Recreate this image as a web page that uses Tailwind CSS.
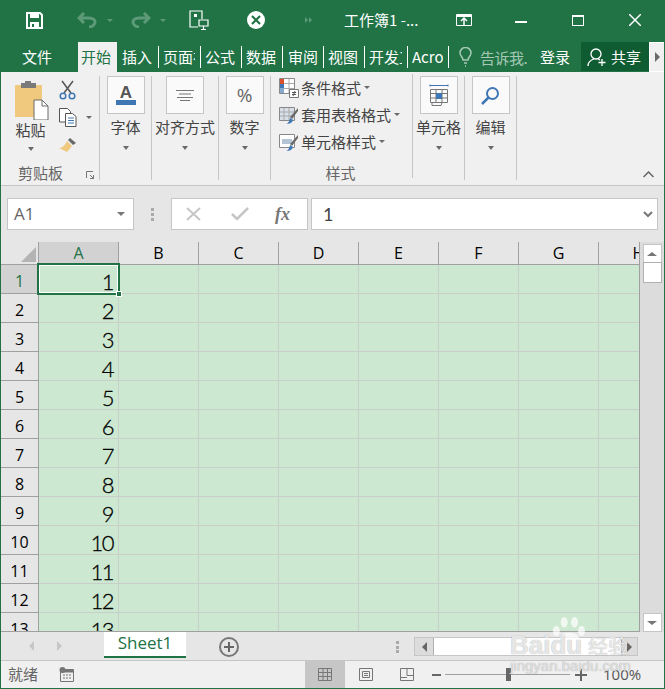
<!DOCTYPE html>
<html lang="en">
<head>
  <meta charset="UTF-8">
  <meta name="viewport" content="width=device-width, initial-scale=1.0">
  <title>工作簿1 - Excel</title>
  <script src="https://cdn.jsdelivr.net/npm/@tailwindcss/browser@4"></script>
</head>
<body class="bg-[#f0f0f0] font-['Noto_Sans_CJK_SC','Noto_Sans',sans-serif]">
  <div class="relative w-[665px] h-[689px] overflow-hidden flex flex-col border-x border-b border-[#217346] bg-[#e6e6e6]">

    <!-- title bar -->
    <div class="h-[42px] shrink-0 -mx-px pb-[2px] bg-[#217346] flex items-center text-white">
      <div class="w-[24px] ml-[22px] flex justify-center">
        <svg width="17" height="17" viewBox="0 0 17 17"><path d="M1 1h13l2 2v13H1z" fill="none" stroke="#fff" stroke-width="2"/><path d="M4 1h9v5H4zM4 10h9v6H4z" fill="#fff"/><path d="M6 12h2v3H6z" fill="#217346"/></svg>
      </div>
      <div class="w-[28px] ml-[27px] flex justify-center">
        <svg width="20" height="16" viewBox="0 0 20 16" fill="none" stroke="#5d9a78" stroke-width="3"><path d="M7 1L2 6l5 5M2 6h10c4 0 6 2 6 4s-2 5-6 5"/></svg>
      </div>
      <div class="w-0 h-0 ml-[6px] border-x-[3px] border-t-[3px] border-x-transparent border-t-[#5d9a78]"></div>
      <div class="w-[28px] ml-[14px] flex justify-center">
        <svg width="20" height="16" viewBox="0 0 20 16" fill="none" stroke="#5d9a78" stroke-width="3"><path d="M13 1l5 5-5 5M18 6H8C4 6 2 8 2 10s2 5 6 5"/></svg>
      </div>
      <div class="w-0 h-0 ml-[5px] border-x-[3px] border-t-[3px] border-x-transparent border-t-[#5d9a78]"></div>
      <div class="w-[24px] ml-[21px] flex justify-center">
        <svg width="20" height="20" viewBox="0 0 20 20" fill="none" stroke="#fff" stroke-width="1.2"><path d="M9 17H1V1h12v8"/><path d="M5 4h3v3H5z" fill="#fff" stroke="none"/><path d="M10 10h9v6h-9zM14.500 16v3M12 19.500h5"/></svg>
      </div>
      <div class="w-[18px] h-[18px] ml-[36px] rounded-full bg-white flex items-center justify-center">
        <svg width="10" height="10" viewBox="0 0 10 10" stroke="#217346" stroke-width="2.200"><path d="M1 1l8 8M9 1l-8 8"/></svg>
      </div>
      <div class="ml-[40px] flex">
        <div class="w-0 h-0 border-y-[3px] border-l-[3px] border-y-transparent border-l-[#5d9a78]"></div>
        <div class="w-0 h-0 ml-px border-y-[3px] border-l-[3px] border-y-transparent border-l-[#5d9a78]"></div>
      </div>
      <div class="ml-[32px] w-[84px] text-[15px] leading-[20px] whitespace-nowrap">工作簿1 -...</div>
      <div class="w-[18px] ml-[27px] flex justify-center">
        <svg width="16" height="12" viewBox="0 0 16 12" fill="none" stroke="#fff"><path d="M.5 .5h15v11H.5z"/><path d="M.5 2h15" stroke-width="2"/><path d="M8 11V4M5 7l3-3 3 3" stroke-width="1.500"/></svg>
      </div>
      <div class="w-[12px] h-[2px] ml-[42px] mt-[3px] bg-white"></div>
      <div class="w-[12px] h-[11px] ml-[45px] border border-t-2 border-white"></div>
      <div class="w-[12px] ml-[45px] flex justify-center">
        <svg width="12" height="12" viewBox="0 0 12 12" stroke="#fff" stroke-width="1.500"><path d="M0 0l12 12M12 0L0 12"/></svg>
      </div>
    </div>

    <!-- ribbon tabs -->
    <div class="h-[30px] shrink-0 -mx-px bg-[#217346] flex text-white text-[15px] leading-[30px] whitespace-nowrap">
      <div class="w-[78px] pl-[22px]">文件</div>
      <div class="w-[39px] bg-[#f0f0f0] text-[#217346] pl-[3px]">开始</div>
      <div class="flex items-center h-full">
        <div class="w-[42px] h-[22px] leading-[22px] overflow-hidden border-r border-white pl-[5px]">插入</div>
        <div class="w-[42px] h-[22px] leading-[22px] border-r border-white pl-[4px]"><div class="w-[32px] overflow-hidden">页面布局</div></div>
        <div class="w-[41px] h-[22px] leading-[22px] overflow-hidden border-r border-white pl-[4px]">公式</div>
        <div class="w-[41px] h-[22px] leading-[22px] overflow-hidden border-r border-white pl-[4px]">数据</div>
        <div class="w-[41px] h-[22px] leading-[22px] overflow-hidden border-r border-white pl-[5px]">审阅</div>
        <div class="w-[41px] h-[22px] leading-[22px] overflow-hidden border-r border-white pl-[4px]">视图</div>
        <div class="w-[43px] h-[22px] leading-[22px] border-r border-white pl-[4px]"><div class="w-[33px] overflow-hidden">开发工具</div></div>
        <div class="w-[41px] h-[22px] leading-[22px] border-r border-white pl-[4px]"><div class="w-[31px] overflow-hidden">Acrobat</div></div>
      </div>
      <div class="w-[31px] flex items-center justify-center pl-[2px]">
        <svg width="13" height="20" viewBox="0 0 13 20" fill="none" stroke="#a6c9b5" stroke-width="1.500"><path d="M4 13c0-3-3-4-3-7a5.500 5.500 0 0 1 11 0c0 3-3 4-3 7zM5 16h3M6 19h1"/></svg>
      </div>
      <div class="w-[50px] overflow-hidden text-[#a6c9b5] mt-px tracking-[-0.5px]">告诉我.</div>
      <div class="w-[51px] pl-[10px]">登录</div>
      <div class="w-[68px] h-[29px] bg-[#0f5c32] flex items-center pl-[6px] gap-[4px]">
        <svg width="20" height="20" viewBox="0 0 20 20" fill="none" stroke="#fff" stroke-width="1.300"><circle cx="9" cy="7" r="5"/><path d="M1 19c0-4 3-6 6-7M11 12l2 1M15 12v7M11.500 15.500h7"/></svg>
        <span class="leading-[29px]">共享</span>
      </div>
      <div class="w-[16px] h-[30px] bg-[#f0f0f0] border border-white flex items-center justify-center">
        <div class="w-0 h-0 border-y-[5px] border-l-[5px] border-y-transparent border-l-[#6a6a6a]"></div>
      </div>
    </div>

    <!-- ribbon -->
    <div class="relative h-[114px] shrink-0 bg-[#f0f0f0] border-b border-[#c6c6c6] flex text-[15px] text-[#444] leading-[20px] pt-[4px]">
      <!-- clipboard -->
      <div class="w-[99px] h-[104px] border-r border-[#c6c6c6] relative shrink-0">
        <div class="flex">
          <div class="w-[58px] flex flex-col items-center pl-[4px] pt-[4px]">
            <svg width="36" height="40" viewBox="0 0 36 40"><path d="M1 5h27v32H1z" fill="#f0c97f"/><path d="M7 3h4V1h6v2h5v5H7z" fill="#7a7a7a"/><path d="M20 20h8l6 6v14H20z" fill="#fff" stroke="#6a6a6a"/><path d="M28 20v6h6" fill="none" stroke="#6a6a6a"/></svg>
            <div class="-ml-[3px]">粘贴</div>
            <div class="mt-[7px] -ml-[3px] w-0 h-0 border-x-[3.500px] border-t-[4px] border-x-transparent border-t-[#6a6a6a]"></div>
          </div>
          <div class="flex flex-col pt-[4px]">
            <svg width="18" height="20" viewBox="0 0 18 20" fill="none" stroke="#555" stroke-width="1.500"><path d="M3 1l9 12M14 1L5 13"/><circle cx="4" cy="16" r="2.800" stroke="#3f77b5"/><circle cx="13" cy="16" r="2.800" stroke="#3f77b5"/></svg>
            <div class="flex items-center mt-[8px]">
              <svg width="18" height="19" viewBox="0 0 18 19" fill="none" stroke="#555"><path d="M.5 .5h8l3 3V14H.5z" fill="#fff"/><path d="M6.500 5.500h7l3.500 3v10H6.500z" fill="#fff"/><path d="M9 10h6M9 12.500h6M9 15h6" stroke="#3f77b5"/></svg>
              <div class="ml-[9px] w-0 h-0 border-x-[3px] border-t-[3px] border-x-transparent border-t-[#6a6a6a]"></div>
            </div>
            <svg class="mt-[10px]" width="18" height="16" viewBox="0 0 18 16"><path d="M11 1l6 5-3 2-5-5z" fill="#6a6a6a"/><path d="M8 4l5 5-5 6-8-4c4 0 6-3 8-7z" fill="#f0c97f"/></svg>
          </div>
        </div>
        <div class="absolute left-[17px] -bottom-[3px] text-[#666]">剪贴板</div>
        <svg class="absolute left-[85px] bottom-[1px]" width="8" height="8" viewBox="0 0 8 8" fill="none" stroke="#777"><path d="M.5 7V.5H7M4 4l3.500 3.500M7.500 4v3.500H4"/></svg>
      </div>

      <!-- collapsed groups -->
      <div class="w-[52px] h-[104px] border-r border-[#c6c6c6] flex flex-col items-center shrink-0">
        <div class="w-[38px] h-[38px] border border-[#c6c6c6] bg-[#fafafa] flex items-center justify-center">
          <svg width="22" height="22" viewBox="0 0 22 22"><text x="11" y="14" text-anchor="middle" font-family="Liberation Sans" font-size="17" font-weight="700" fill="#555">A</text><path d="M1 16h20v5H1z" fill="#3f77b5"/></svg>
        </div>
        <div class="mt-[3px]">字体</div>
        <div class="mt-[9px] w-0 h-0 border-x-[3.500px] border-t-[4px] border-x-transparent border-t-[#6a6a6a]"></div>
      </div>
      <div class="w-[67px] h-[104px] border-r border-[#c6c6c6] flex flex-col items-center shrink-0">
        <div class="w-[38px] h-[38px] border border-[#c6c6c6] bg-[#fafafa] flex items-center justify-center">
          <svg width="18" height="11" viewBox="0 0 18 11" stroke="#777"><path d="M0 .5h18M3 4h12M1 7.500h16M4 10.500h10"/></svg>
        </div>
        <div class="mt-[3px] whitespace-nowrap">对齐方式</div>
        <div class="mt-[9px] w-0 h-0 border-x-[3.500px] border-t-[4px] border-x-transparent border-t-[#6a6a6a]"></div>
      </div>
      <div class="w-[52px] h-[104px] border-r border-[#c6c6c6] flex flex-col items-center shrink-0">
        <div class="w-[38px] h-[38px] border border-[#c6c6c6] bg-[#fafafa] flex items-center justify-center font-['Open_Sans'] text-[19px] text-[#666]">%</div>
        <div class="mt-[3px]">数字</div>
        <div class="mt-[9px] w-0 h-0 border-x-[3.500px] border-t-[4px] border-x-transparent border-t-[#6a6a6a]"></div>
      </div>

      <!-- styles -->
      <div class="w-[142px] h-[104px] border-r border-[#c6c6c6] relative shrink-0 pl-[8px] -mt-[2px] flex flex-col">
        <div class="h-[27px] flex items-center gap-[2px] whitespace-nowrap">
          <svg width="20" height="20" viewBox="0 0 20 20"><path d="M.5 .5h15v15H.5z" fill="#fff" stroke="#888"/><path d="M1 1h4v5H1z" fill="#d8502e"/><path d="M1 6h4v4H1z" fill="#3f77b5"/><path d="M1 10h4v5H1z" fill="#86a9d1"/><path d="M5 5.500h10M5 10.500h10M10 1v14" stroke="#aaa"/><path d="M10.500 11.500h9v8h-9z" fill="#fff" stroke="#777"/><path d="M13 14.500h4M13 16.500h4M16 13l-2 5" stroke="#555" fill="none"/></svg>
          <span>条件格式</span>
          <div class="w-0 h-0 ml-px border-x-[3px] border-t-[3px] border-x-transparent border-t-[#6a6a6a]"></div>
        </div>
        <div class="h-[27px] flex items-center gap-[2px] whitespace-nowrap">
          <svg width="20" height="20" viewBox="0 0 20 20"><path d="M.5 2.500h15v13H.5z" fill="#d7dfe8" stroke="#888"/><path d="M5 3v12M10 3v12M1 7h14M1 11h14" stroke="#aaa"/><path d="M19 3l-8 9 2 2 6-8z" fill="#6a6a6a"/><path d="M6 19c3 0 4-2 5-6l3 2c-1 3-3 4-8 4z" fill="#3f77b5"/></svg>
          <span>套用表格格式</span>
          <div class="w-0 h-0 ml-px border-x-[3px] border-t-[3px] border-x-transparent border-t-[#6a6a6a]"></div>
        </div>
        <div class="h-[27px] flex items-center gap-[2px] whitespace-nowrap">
          <svg width="20" height="20" viewBox="0 0 20 20"><path d="M.5 2.500h15v13H.5z" fill="#fff" stroke="#888"/><path d="M3 7h10v5H3z" fill="#b5c5d8"/><path d="M19 3l-8 9 2 2 6-8z" fill="#6a6a6a"/><path d="M6 19c3 0 4-2 5-6l3 2c-1 3-3 4-8 4z" fill="#3f77b5"/></svg>
          <span>单元格样式</span>
          <div class="w-0 h-0 ml-px border-x-[3px] border-t-[3px] border-x-transparent border-t-[#6a6a6a]"></div>
        </div>
        <div class="absolute left-0 right-[2px] -bottom-[5px] text-center text-[#666]">样式</div>
      </div>

      <div class="w-[52px] h-[104px] border-r border-[#c6c6c6] flex flex-col items-center shrink-0">
        <div class="w-[38px] h-[38px] border border-[#c6c6c6] bg-[#fafafa] flex items-center justify-center">
          <svg width="20" height="22" viewBox="0 0 20 22" fill="none" stroke="#777"><path d="M1 1.500h18M1 .5v2M19 .5v2" stroke="#3f77b5"/><path d="M1.500 5.500h17v13h-17zM1.500 9.500h17M1.500 14h17M7 5.500v13M13 5.500v13"/><path d="M7 9h6v6H7z" fill="#3f77b5" stroke="none"/><path d="M3 18.500v3h9l1-3"/></svg>
        </div>
        <div class="mt-[3px] whitespace-nowrap">单元格</div>
        <div class="mt-[9px] w-0 h-0 border-x-[3.500px] border-t-[4px] border-x-transparent border-t-[#6a6a6a]"></div>
      </div>
      <div class="w-[52px] h-[104px] border-r border-[#c6c6c6] flex flex-col items-center shrink-0">
        <div class="w-[38px] h-[38px] border border-[#c6c6c6] bg-[#fafafa] flex items-center justify-center">
          <svg width="19" height="19" viewBox="0 0 19 19" fill="none" stroke="#3f77b5" stroke-width="2"><circle cx="11.500" cy="7.500" r="5.500"/><path d="M7.500 11.500L1 18" stroke-width="2.500"/></svg>
        </div>
        <div class="mt-[3px]">编辑</div>
        <div class="mt-[9px] w-0 h-0 border-x-[3.500px] border-t-[4px] border-x-transparent border-t-[#6a6a6a]"></div>
      </div>
      <svg class="absolute right-[10px] bottom-[7px]" width="11" height="7" viewBox="0 0 11 7" fill="none" stroke="#666" stroke-width="1.500"><path d="M.5 6l5-5 5 5"/></svg>
    </div>

    <!-- formula bar -->
    <div class="h-[56px] shrink-0 flex items-start pt-[12px] pl-[6px] text-[#666]">
      <div class="w-[127px] h-[32px] bg-white border border-[#c6c6c6] flex items-center justify-between pl-[6px] pr-[8px] font-['Open_Sans'] text-[17px]">
        <span>A1</span>
        <div class="w-0 h-0 border-x-[4px] border-t-[4px] border-x-transparent border-t-[#777]"></div>
      </div>
      <div class="w-[37px] h-[32px] flex flex-col items-center justify-center gap-[2px]">
        <div class="w-[3px] h-[3px] bg-[#aaa]"></div>
        <div class="w-[3px] h-[3px] bg-[#aaa]"></div>
        <div class="w-[3px] h-[3px] bg-[#aaa]"></div>
      </div>
      <div class="w-[137px] h-[32px] bg-white border border-[#c6c6c6] flex items-center pl-[14px]">
        <svg width="16" height="14" viewBox="0 0 16 14" stroke="#c6c6c6" stroke-width="2"><path d="M1 1l13 12M14 1L1 13"/></svg>
        <svg class="ml-[29px]" width="18" height="14" viewBox="0 0 18 14" fill="none" stroke="#c6c6c6" stroke-width="2.500"><path d="M1 7l5 5L17 1"/></svg>
        <span class="ml-[26px] font-['Liberation_Serif'] italic font-bold text-[18px] text-[#777]">fx</span>
      </div>
      <div class="w-[347px] h-[32px] ml-[3px] bg-white border border-[#c6c6c6] flex items-center justify-between pl-[11px] pr-[4px] text-[18px] font-['Lato'] text-[#444]">
        <span>1</span>
        <svg width="10" height="7" viewBox="0 0 10 7" fill="none" stroke="#777" stroke-width="2"><path d="M1 1l4 4 4-4"/></svg>
      </div>
    </div>

    <!-- sheet -->
    <div class="flex-1 min-h-0 flex">
      <div class="relative w-[639px] h-[390px] overflow-hidden shrink-0 border-r border-b border-[#a0a0a0]">
        <div id="sheet" class="grid grid-cols-[38px_80px_80px_80px_80px_80px_80px_80px_80px] grid-rows-[23px] auto-rows-[29px] font-['Lato'] text-black"></div>
        <!-- selected cell -->
        <div class="absolute left-[36px] top-[21px] w-[83px] h-[32px] border-2 border-[#217346] outline outline-1 -outline-offset-3 outline-white"></div>
        <div class="absolute left-[115px] top-[49px] w-[6px] h-[6px] bg-[#217346] border border-white"></div>
      </div>
      <div class="w-[24px] h-[390px] bg-[#dcdcdc] shrink-0 flex flex-col items-center pt-[2px]">
        <div class="w-[19px] h-[19px] bg-white border border-[#c6c6c6] flex items-center justify-center">
          <div class="w-0 h-0 border-x-[5px] border-b-[4px] border-x-transparent border-b-[#777]"></div>
        </div>
        <div class="w-[19px] h-[21px] bg-white border border-[#b0b0b0] -mt-px"></div>
        <div class="w-[19px] h-[19px] bg-white border border-[#c6c6c6] flex items-center justify-center mt-auto">
          <div class="w-0 h-0 border-x-[5px] border-t-[4px] border-x-transparent border-t-[#777]"></div>
        </div>
      </div>
    </div>

    <!-- sheet tabs -->
    <div class="h-[29px] shrink-0 flex items-start bg-[#e6e6e6] border-b border-[#c6c6c6]">
      <div class="w-[103px] h-[28px] flex items-center pl-[28px] gap-[23px]">
        <div class="w-0 h-0 border-y-[5px] border-r-[5px] border-y-transparent border-r-[#c6c6c6]"></div>
        <div class="w-0 h-0 border-y-[5px] border-l-[5px] border-y-transparent border-l-[#c6c6c6]"></div>
      </div>
      <div class="w-[82px] h-[26px] bg-white border-b-2 border-[#217346] text-center text-[#217346] font-['Open_Sans'] text-[17px] leading-[22px]">Sheet1</div>
      <div class="w-[20px] h-[20px] ml-[33px] mt-[5px] rounded-full border-2 border-[#777] flex items-center justify-center">
        <svg width="10" height="10" viewBox="0 0 10 10" stroke="#666" stroke-width="2"><path d="M5 0v10M0 5h10"/></svg>
      </div>
      <div class="ml-[157px] mt-[9px] h-[12px] flex flex-col justify-between">
        <div class="w-[3px] h-[3px] bg-[#aaa]"></div>
        <div class="w-[3px] h-[3px] bg-[#aaa]"></div>
        <div class="w-[3px] h-[3px] bg-[#aaa]"></div>
      </div>
      <div class="w-[224px] h-[19px] ml-[15px] mt-[5px] bg-[#dcdcdc] border border-[#c6c6c6] flex items-center">
        <div class="w-[18px] flex justify-center"><div class="w-0 h-0 border-y-[5px] border-r-[5px] border-y-transparent border-r-[#666]"></div></div>
        <div class="w-[189px] h-[17px] bg-white border-x border-[#b0b0b0]"></div>
        <div class="w-[15px] flex justify-center"><div class="w-0 h-0 border-y-[5px] border-l-[5px] border-y-transparent border-l-[#666]"></div></div>
      </div>
    </div>

    <!-- status bar -->
    <div class="h-[27px] shrink-0 bg-[#f0f0f0] flex items-center text-[15px] text-[#666]">
      <div class="w-[58px] pl-[7px]">就绪</div>
      <svg width="16" height="15" viewBox="0 0 16 15" fill="none" stroke="#777"><path d="M1.500 2.500h13v12h-13z"/><path d="M2 3h12v2H2z" fill="#777"/><circle cx="3.500" cy="3" r="3" fill="#777" stroke="none"/><path d="M4 8h2M7 8h2M10 8h2M4 11h2M7 11h2M10 11h2"/></svg>
      <div class="w-[40px] h-[27px] ml-[230px] bg-[#c6c6c6] flex items-center justify-center">
        <svg width="14" height="13" viewBox="0 0 14 13" fill="none" stroke="#777"><path d="M.5 .5h13v12H.5zM.5 4.500h13M.5 8.500h13M5 .5v12M9.500 .5v12"/></svg>
      </div>
      <svg class="ml-[14px]" width="14" height="13" viewBox="0 0 14 13" fill="none" stroke="#777"><path d="M.5 .5h13v12H.5zM3.500 3.500h7v6h-7zM5 5.500h4M5 7.500h4"/></svg>
      <svg class="ml-[27px]" width="14" height="13" viewBox="0 0 14 13" fill="none" stroke="#777"><path d="M.5 .5h13v12H.5zM7 .5v7M7 7.500h6.500M.5 9.500H7"/></svg>
      <div class="w-[9px] h-[2px] bg-[#666] ml-[18px]"></div>
      <div class="relative w-[125px] h-px bg-[#a0a0a0] ml-[4px]">
        <div class="absolute left-[61px] -top-[6px] w-[5px] h-[13px] bg-[#666]"></div>
      </div>
      <svg class="ml-[5px]" width="12" height="12" viewBox="0 0 12 12" stroke="#666" stroke-width="2"><path d="M6 0v12M0 6h12"/></svg>
      <div class="ml-[16px] font-['Open_Sans'] text-[15px] text-[#555]">100%</div>
    </div>

    <!-- baidu watermark -->
    <div class="absolute left-[509px] top-[615px] w-[140px] h-[72px] text-white/75 pointer-events-none [text-shadow:0_0_1px_#999]">
      <svg class="absolute left-[41px] top-[2px]" width="35" height="26" viewBox="0 0 38 30" fill="#fff" fill-opacity=".7"><ellipse cx="5" cy="16" rx="4" ry="6"/><ellipse cx="14" cy="6" rx="4" ry="6"/><ellipse cx="26" cy="6" rx="4" ry="6"/><ellipse cx="34" cy="16" rx="4" ry="6"/><ellipse cx="20" cy="24" rx="11" ry="6"/></svg>
      <div class="absolute left-0 top-[17px] font-['Liberation_Sans'] font-bold text-[26px] leading-[26px] whitespace-nowrap">Baidu</div>
      <div class="absolute left-[78px] top-[20px] text-[20px] leading-[22px] whitespace-nowrap">经验</div>
      <div class="absolute left-0 top-[43px] font-['Liberation_Sans'] text-[15px] leading-[16px] text-white/60 whitespace-nowrap">jingyan.baidu.com</div>
    </div>
  </div>

  <script>
    const cols = ['A', 'B', 'C', 'D', 'E', 'F', 'G', 'H'];
    const sheet = document.getElementById('sheet');
    let html = '<div class="relative bg-[#e6e6e6] border-r border-b border-[#a0a0a0]"><svg class="absolute right-[2px] bottom-[2px]" width="15" height="15"><path d="M15 0v15H0z" fill="#b4b4b4"/></svg></div>';

    cols.forEach((col, i) => {
      const active = i === 0;
      html += `<div class="${active ? 'bg-[#d2d2d2] text-[#217346]' : 'bg-[#e6e6e6]'} border-r border-b border-[#a0a0a0] text-center text-[16px] leading-[23px] overflow-hidden font-['Open_Sans']">${col}</div>`;
    });

    for (let row = 1; row <= 13; row++) {
      const active = row === 1;
      html += `<div class="${active ? 'bg-[#d2d2d2] text-[#217346]' : 'bg-[#e6e6e6]'} border-r border-b border-[#a0a0a0] text-center text-[16px] leading-[32px] font-['Open_Sans']">${row}</div>`;
      cols.forEach((col, i) => {
        html += `<div class="bg-[#cde8d0] border-r border-b border-[#c8cfc8] text-right pr-[5px] text-[22px] font-light [-webkit-text-stroke:0.3px_#000] tracking-[-1.5px] leading-[33px] text-black">${i === 0 ? row : ''}</div>`;
      });
    }
    sheet.innerHTML = html;
  </script>
</body>
</html>
